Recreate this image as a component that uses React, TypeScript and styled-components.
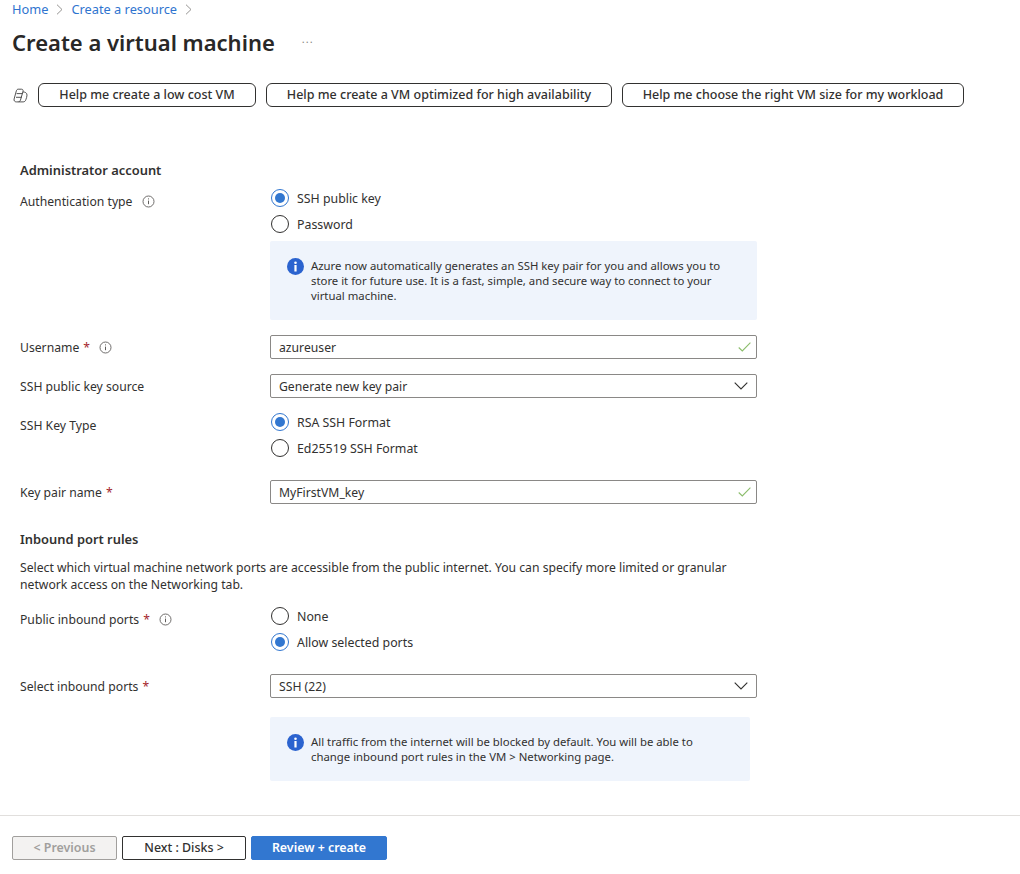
import React from 'react';
import styled, { createGlobalStyle } from 'styled-components';

const GlobalStyle = createGlobalStyle`
  html, body {
    margin: 0;
    padding: 0;
    background: #fff;
    font-family: "Noto Sans", "Open Sans", sans-serif;
    font-size: 12.2px;
    color: #323130;
  }
`;

const Page = styled.div`
  width: 1020px;
  height: 874px;
  overflow: hidden;
  display: flex;
  flex-direction: column;
`;

const Breadcrumb = styled.nav`
  display: flex;
  align-items: center;
  gap: 8px;
  height: 18px;
  padding-left: 12px;
  font-size: 12.8px;
  color: #2f74cf;
`;

const TitleRow = styled.div`
  display: flex;
  align-items: center;
  height: 34px;
  margin-top: 7px;
  padding-left: 12px;
`;

const Title = styled.h1`
  margin: 0;
  font-size: 22px;
  font-weight: 600;
  color: #292827;
`;

const More = styled.span`
  margin: 0 0 8px 27px;
  font-size: 11px;
  color: #8a8886;
  letter-spacing: 1px;
`;

const PromptRow = styled.div`
  display: flex;
  align-items: center;
  height: 24px;
  margin-top: 24px;
  padding-left: 13px;
`;

const PromptButton = styled.div<{ $w: number }>`
  box-sizing: border-box;
  width: ${p => p.$w}px;
  height: 24px;
  margin-left: 10px;
  padding-bottom: 1px;
  display: flex;
  align-items: center;
  justify-content: center;
  border: 1px solid #323130;
  border-radius: 6px;
  font-size: 12.5px;
  font-weight: 500;
`;

const Form = styled.div`
  display: flex;
  flex-direction: column;
  padding: 0 20px;
  margin-top: 54px;
`;

const Heading = styled.div<{ $top?: number }>`
  margin-top: ${p => p.$top || 0}px;
  font-size: 12.9px;
  font-weight: 600;
  height: 18px;
  line-height: 18px;
`;

const Row = styled.div<{ $top: number }>`
  display: grid;
  grid-template-columns: 250px 487px;
  margin-top: ${p => p.$top}px;
`;

const Label = styled.div<{ $top?: number }>`
  display: flex;
  align-items: center;
  height: 24px;
  margin-top: ${p => p.$top || 0}px;
`;

const Star = styled.span`
  margin-left: 4px;
  color: #a4262c;
`;

const Control = styled.div`
  display: flex;
  flex-direction: column;
`;

const RadioRow = styled.div`
  display: flex;
  align-items: center;
  height: 26px;
  gap: 8px;
  font-size: 12.35px;
`;

const RadioCircle = styled.span<{ $on?: boolean }>`
  box-sizing: border-box;
  width: 18px;
  height: 18px;
  margin-left: 1px;
  border-radius: 50%;
  border: 1px solid ${p => (p.$on ? '#3277d0' : '#323130')};
  display: flex;
  align-items: center;
  justify-content: center;
  &::after {
    content: '';
    width: 10px;
    height: 10px;
    border-radius: 50%;
    background: ${p => (p.$on ? '#3277d0' : 'transparent')};
  }
`;

const Field = styled.div`
  box-sizing: border-box;
  height: 24px;
  display: flex;
  align-items: center;
  justify-content: space-between;
  padding: 0 5px 0 8px;
  border: 1px solid #8a8886;
  border-radius: 2px;
`;

const InfoBox = styled.div<{ $w: number; $h: number; $top: number; $pad: number }>`
  box-sizing: border-box;
  width: ${p => p.$w}px;
  height: ${p => p.$h}px;
  margin-top: ${p => p.$top}px;
  display: flex;
  gap: 7px;
  padding: ${p => p.$pad}px 17px 0;
  background: #eff4fc;
  font-size: 11.35px;
  line-height: 15px;
  border-radius: 2px;
`;

const Paragraph = styled.p`
  margin: 11px 0 0;
  width: 720px;
  line-height: 17px;
`;

const Footer = styled.div`
  margin-top: 34px;
  border-top: 1px solid #e1dfdd;
  display: flex;
  gap: 5px;
  padding: 20px 12px 0;
`;

const FooterButton = styled.div<{ $w: number; $kind: 'off' | 'line' | 'main' }>`
  box-sizing: border-box;
  width: ${p => p.$w}px;
  height: 24px;
  padding-bottom: 1px;
  display: flex;
  align-items: center;
  justify-content: center;
  border-radius: 2px;
  font-size: 12.4px;
  font-weight: ${p => (p.$kind === 'line' ? 500 : 600)};
  border: 1px solid ${p => (p.$kind === 'off' ? '#a19f9d' : p.$kind === 'line' ? '#323130' : '#3277d0')};
  background: ${p => (p.$kind === 'off' ? '#f3f2f1' : p.$kind === 'line' ? '#fff' : '#3277d0')};
  color: ${p => (p.$kind === 'off' ? '#a19f9d' : p.$kind === 'line' ? '#323130' : '#fff')};
`;

const Icon = styled.svg<{ $left?: number; $right?: number }>`
  flex: none;
  margin-left: ${p => p.$left || 0}px;
  margin-right: ${p => p.$right || 0}px;
`;

const Tip = ({ left = 9 }: { left?: number }) => (
  <Icon $left={left} width="13" height="13" viewBox="0 0 13 13" fill="none" stroke="#605e5c">
    <circle cx="6.5" cy="6.5" r="5.5" strokeWidth="0.9" />
    <path d="M6.5 5.6v3.6M6.5 3.4v1" strokeWidth="1" />
  </Icon>
);

const Chevron = () => (
  <Icon $right={3} width="14" height="8" viewBox="0 0 14 8" fill="none" stroke="#323130" strokeWidth="1.1">
    <path d="M.7.7 7 7 13.3.7" />
  </Icon>
);

const Check = () => (
  <Icon width="13" height="10" viewBox="0 0 13 10" fill="none" stroke="#8cbd6c" strokeWidth="1.1">
    <path d="M.7 5.5 4.3 9 12.4.7" />
  </Icon>
);

const Crumb = () => (
  <Icon width="7" height="11" viewBox="0 0 7 11" fill="none" stroke="#8a8886" strokeWidth="0.9">
    <path d="M1 .7 6 5.500 1 10.300" />
  </Icon>
);

const InfoIcon = () => (
  <Icon width="17" height="17" viewBox="0 0 17 17">
    <circle cx="8.500" cy="8.500" r="8.500" fill="#2b63cf" />
    <rect x="7.400" y="7" width="2.200" height="6.500" fill="#fff" />
    <circle cx="8.500" cy="4.700" r="1.300" fill="#fff" />
  </Icon>
);

const CopilotIcon = () => (
  <Icon width="15" height="15" viewBox="0 0 15 15" fill="none" stroke="#424242" strokeWidth="0.9">
    <path d="M5.200 1.200h3.300c1.200 0 1.900.9 1.500 2.100L7.500 12c-.4 1.200-1.300 1.900-2.500 1.900H3.300C1.600 13.900.7 12.500 1.100 11L3.300 3c.3-1.100 1-1.800 1.900-1.800Z" />
    <path d="M9.800 3.900c2.300.1 4.200.9 4.200 3.200 0 1.500-.6 3-1.200 4.700-.4 1.300-1.300 2.100-2.600 2.100H5.600" />
    <path d="M3.600 5.600h6M3 9.300h5.700" />
  </Icon>
);

const Radio = ({ on, children }: { on?: boolean; children: React.ReactNode }) => (
  <RadioRow>
    <RadioCircle $on={on} />
    {children}
  </RadioRow>
);

export default function App() {
  return (
    <Page>
      <GlobalStyle />
      <Breadcrumb>
        <span>Home</span>
        <Crumb />
        <span>Create a resource</span>
        <Crumb />
      </Breadcrumb>
      <TitleRow>
        <Title>Create a virtual machine</Title>
        <More>...</More>
      </TitleRow>
      <PromptRow>
        <CopilotIcon />
        <PromptButton $w={218}>Help me create a low cost VM</PromptButton>
        <PromptButton $w={346}>Help me create a VM optimized for high availability</PromptButton>
        <PromptButton $w={342}>Help me choose the right VM size for my workload</PromptButton>
      </PromptRow>
      <Form>
        <Heading>Administrator account</Heading>
        <Row $top={6}>
          <Label $top={4}>
            Authentication type
            <Tip />
          </Label>
          <Control>
            <Radio on>SSH public key</Radio>
            <Radio>Password</Radio>
            <InfoBox $w={487} $h={79} $top={4} $pad={17}>
              <InfoIcon />
              <div>
                Azure now automatically generates an SSH key pair for you and allows you to store it for future use. It is
                a fast, simple, and secure way to connect to your virtual machine.
              </div>
            </InfoBox>
          </Control>
        </Row>
        <Row $top={15}>
          <Label>
            Username<Star>*</Star>
            <Tip />
          </Label>
          <Field>
            azureuser
            <Check />
          </Field>
        </Row>
        <Row $top={15}>
          <Label>SSH public key source</Label>
          <Field>
            Generate new key pair
            <Chevron />
          </Field>
        </Row>
        <Row $top={11}>
          <Label $top={4}>SSH Key Type</Label>
          <Control>
            <Radio on>RSA SSH Format</Radio>
            <Radio>Ed25519 SSH Format</Radio>
          </Control>
        </Row>
        <Row $top={19}>
          <Label>
            Key pair name<Star>*</Star>
          </Label>
          <Field>
            MyFirstVM_key
            <Check />
          </Field>
        </Row>
        <Heading $top={26}>Inbound port rules</Heading>
        <Paragraph>
          Select which virtual machine network ports are accessible from the public internet. You can specify more
          limited or granular network access on the Networking tab.
        </Paragraph>
        <Row $top={10}>
          <Label $top={4}>
            Public inbound ports<Star>*</Star>
            <Tip />
          </Label>
          <Control>
            <Radio>None</Radio>
            <Radio on>Allow selected ports</Radio>
          </Control>
        </Row>
        <Row $top={19}>
          <Label>
            Select inbound ports<Star>*</Star>
          </Label>
          <Field>
            SSH (22)
            <Chevron />
          </Field>
        </Row>
        <Row $top={19}>
          <div />
          <InfoBox $w={480} $h={64} $top={0} $pad={17}>
            <InfoIcon />
            <div>
              All traffic from the internet will be blocked by default. You will be able to change inbound port rules in
              the VM &gt; Networking page.
            </div>
          </InfoBox>
        </Row>
      </Form>
      <Footer>
        <FooterButton $w={105} $kind="off">&lt; Previous</FooterButton>
        <FooterButton $w={124} $kind="line">Next : Disks &gt;</FooterButton>
        <FooterButton $w={136} $kind="main">Review + create</FooterButton>
      </Footer>
    </Page>
  );
}
